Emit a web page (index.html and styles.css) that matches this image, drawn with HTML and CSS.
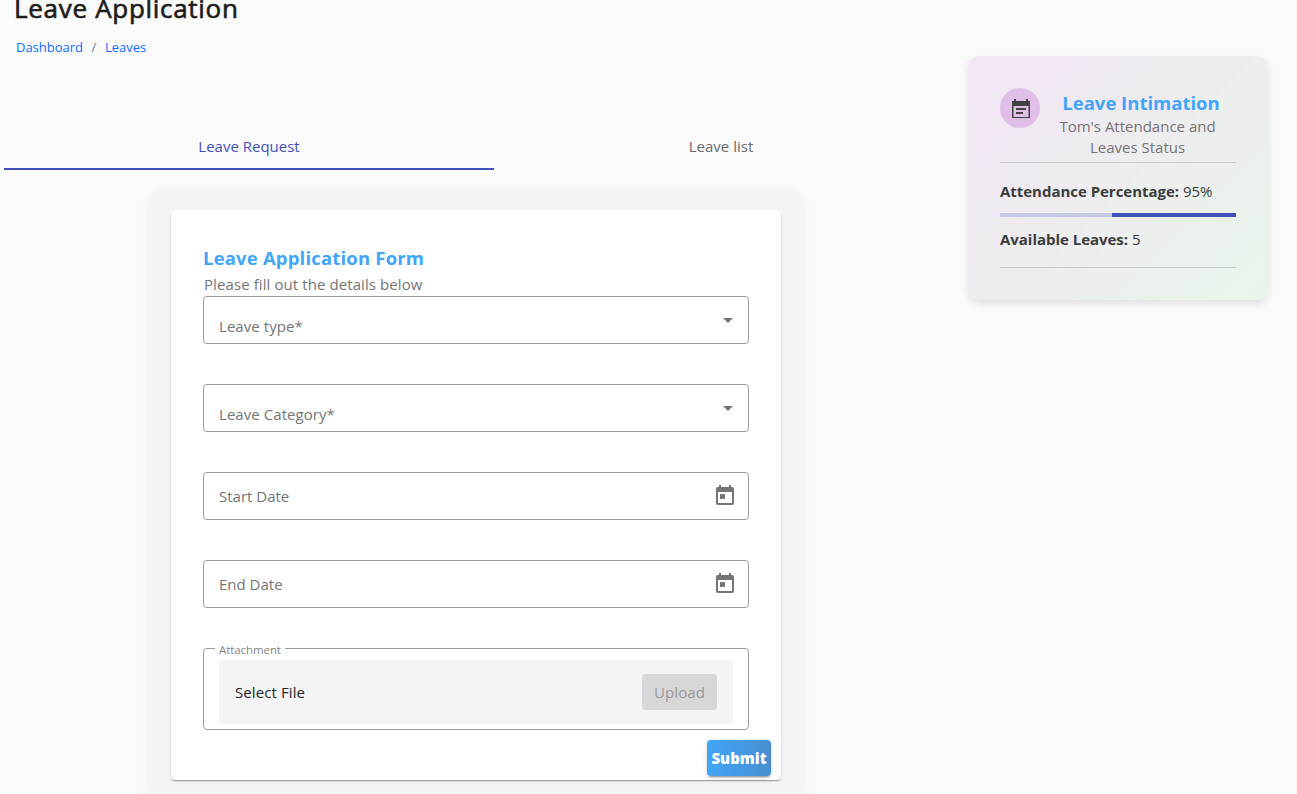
FILE: index.html
```html
<!DOCTYPE html>
<html lang="en">
<head>
<meta charset="utf-8">
<title>Leave Application</title>
<link rel="stylesheet" href="styles.css">
</head>
<body>
<div class="page">
  <main class="main">
    <h1 class="page-title">Leave Application</h1>
    <nav class="breadcrumb"><a>Dashboard</a><span class="slash">/</span><a>Leaves</a></nav>
    <div class="tabs">
      <div class="tab tab-active">Leave Request</div>
      <div class="tab">Leave list</div>
    </div>
    <section class="form-container">
      <form class="form-card">
        <h2 class="form-title">Leave Application Form</h2>
        <p class="form-subtitle">Please fill out the details below</p>
        <div class="field select"><span class="label">Leave type*</span><i class="arrow"></i></div>
        <div class="field select"><span class="label">Leave Category*</span><i class="arrow"></i></div>
        <div class="field"><span class="label">Start Date</span>
          <svg class="calendar" viewBox="0 0 24 24"><path d="M19 3h-1V1h-2v2H8V1H6v2H5c-1.11 0-1.99.9-1.99 2L3 19c0 1.1.89 2 2 2h14c1.1 0 2-.9 2-2V5c0-1.1-.9-2-2-2zm0 16H5V8h14v11zM7 10h5v5H7z"/></svg></div>
        <div class="field"><span class="label">End Date</span>
          <svg class="calendar" viewBox="0 0 24 24"><path d="M19 3h-1V1h-2v2H8V1H6v2H5c-1.11 0-1.99.9-1.99 2L3 19c0 1.1.89 2 2 2h14c1.1 0 2-.9 2-2V5c0-1.1-.9-2-2-2zm0 16H5V8h14v11zM7 10h5v5H7z"/></svg></div>
        <div class="attachment">
          <span class="attachment-label">Attachment</span>
          <div class="file-bar"><span class="file-text">Select File</span><button class="upload" type="button" disabled>Upload</button></div>
        </div>
        <div class="actions"><button class="submit" type="button">Submit</button></div>
      </form>
    </section>
  </main>
  <aside class="status-card">
    <header class="status-header">
      <div class="avatar">
        <svg class="note" viewBox="0 0 24 24"><path fill-rule="evenodd" d="M3 4h2V2h2v2h10V2h2v2h2v17H3zM4.5 9v11h15V9zM7 11h10v2H7zM7 15h7v2H7z"/></svg>
      </div>
      <div class="status-heading">
        <h3 class="status-title">Leave Intimation</h3>
        <p class="status-subtitle">Tom's Attendance and<br>Leaves Status</p>
      </div>
    </header>
    <p class="stat stat-first"><strong>Attendance Percentage:</strong> 95%</p>
    <div class="progress"><div class="progress-bar"></div></div>
    <p class="stat"><strong>Available Leaves:</strong> 5</p>
    <div class="divider"></div>
  </aside>
</div>
</body>
</html>
```
FILE: styles.css
```css
* { box-sizing: border-box; }
html, body { height: 100%; overflow: hidden; }
body { margin: 0; background: #fafafa; color: #212529; font: 15px/24px "Segoe UI", "Open Sans", "Noto Sans", sans-serif; }
h1, h2, h3, p { margin: 0; font-weight: 400; white-space: nowrap; }
.page { display: flex; align-items: flex-start; gap: 20px; height: 794px; padding-left: 4px; overflow: hidden; }
.main { width: 944px; }
.page-title { height: 36px; padding-left: 10px; font-size: 26px; line-height: 16px; font-weight: 500; letter-spacing: .7px; color: #1d1d1d; -webkit-text-stroke: .65px #1d1d1d; }
.breadcrumb { display: flex; height: 22px; padding-left: 12px; font-size: 13px; line-height: 22px; letter-spacing: -.02px; color: #0d6efd; }
.slash { width: 22px; text-align: center; color: #6c757d; }
.tabs { display: flex; margin-top: 64px; height: 48px; }
.tab { width: 454px; text-align: center; line-height: 49px; color: #6a6a6a; }
.tab-active { width: 490px; color: #3f51b5; border-bottom: 2px solid #3f51b5; }
.form-container { width: 650px; height: 604px; margin: 20px auto 0; padding: 20px; border-radius: 8px 8px 0 0; background: #f4f4f4; box-shadow: 0 4px 12px rgba(0,0,0,.07); }
.form-card { height: 570px; padding: 35px 32px 0; border-radius: 4px; background: #fff; box-shadow: 0 2px 1px -1px rgba(0,0,0,.2), 0 1px 1px rgba(0,0,0,.14), 0 1px 3px rgba(0,0,0,.12); }
.form-title { height: 28px; font-size: 18.5px; line-height: 25px; font-weight: 700; letter-spacing: .18px; color: #42a5f5; }
.form-subtitle { height: 23px; padding-left: 1px; line-height: 22px; letter-spacing: .09px; color: #757575; }
.field { display: flex; justify-content: space-between; align-items: center; height: 48px; margin-bottom: 40px; padding: 0 11px 0 15px; border: 1px solid #9e9e9e; border-radius: 4px; color: #757575; }
.select { padding-right: 15px; }
.select .label { padding-top: 12px; letter-spacing: .06px; }
.arrow { border: 5px solid transparent; border-top-color: #757575; border-bottom: 0; }
.calendar { width: 24px; height: 24px; fill: #757575; }
.attachment { position: relative; height: 82px; padding: 11px 15px 5px; border: 1px solid #9e9e9e; border-radius: 4px; }
.attachment-label { position: absolute; left: 11px; top: -8px; width: 70px; padding-left: 4px; background: #fff; color: #858585; font-size: 11.5px; line-height: 18px; letter-spacing: -.08px; }
.file-bar { display: flex; justify-content: space-between; align-items: center; height: 64px; padding: 0 16px; background: #f4f4f4; }
.file-text { letter-spacing: .1px; }
.upload { width: 75px; height: 36px; padding: 0; border: 0; border-radius: 4px; background: #d7d7d7; color: #999; font: inherit; letter-spacing: .1px; }
.actions { display: flex; justify-content: flex-end; margin: 10px -22px 0 0; }
.submit { width: 64px; height: 36px; padding: 0; border: 0; border-radius: 4px; background: linear-gradient(to right, #42a5f5, #478ed1); color: #fff; font: 800 15px/36px "Segoe UI", "Open Sans", "Noto Sans", sans-serif; box-shadow: 0 3px 1px -2px rgba(0,0,0,.2), 0 2px 2px rgba(0,0,0,.14), 0 1px 5px rgba(0,0,0,.12); }
.status-card { width: 300px; height: 244px; margin-top: 56px; padding: 32px; border-radius: 12px; background: linear-gradient(135deg, #f3e5f5, #e8f5e9); box-shadow: 0 4px 8px rgba(0,0,0,.1); color: #3c3c3c; }
.status-header { display: flex; height: 75px; border-bottom: 1px solid #ccc; }
.avatar { display: grid; place-items: center; width: 40px; height: 40px; border-radius: 50%; background: #e1bee7; }
.note { width: 24px; height: 24px; margin: 2px 0 0 2px; fill: #424242; }
.status-heading { flex: 1; padding-top: 2px; text-align: center; }
.status-title { height: 26px; padding-left: 6px; font-size: 18.5px; line-height: 25px; font-weight: 700; color: #42a5f5; }
.status-subtitle { line-height: 21px; color: #757575; padding-right: 1px; }
.stat { height: 24px; line-height: 24px; letter-spacing: -.03px; }
.stat-first { margin: 16px 0 10px; }
.progress { height: 4px; margin-bottom: 10px; background: #c5c9e3; }
.progress-bar { width: 124px; height: 4px; margin-left: auto; background: #3f51b5; }
.divider { margin-top: 16px; border-top: 1px solid #ccc; }
```
